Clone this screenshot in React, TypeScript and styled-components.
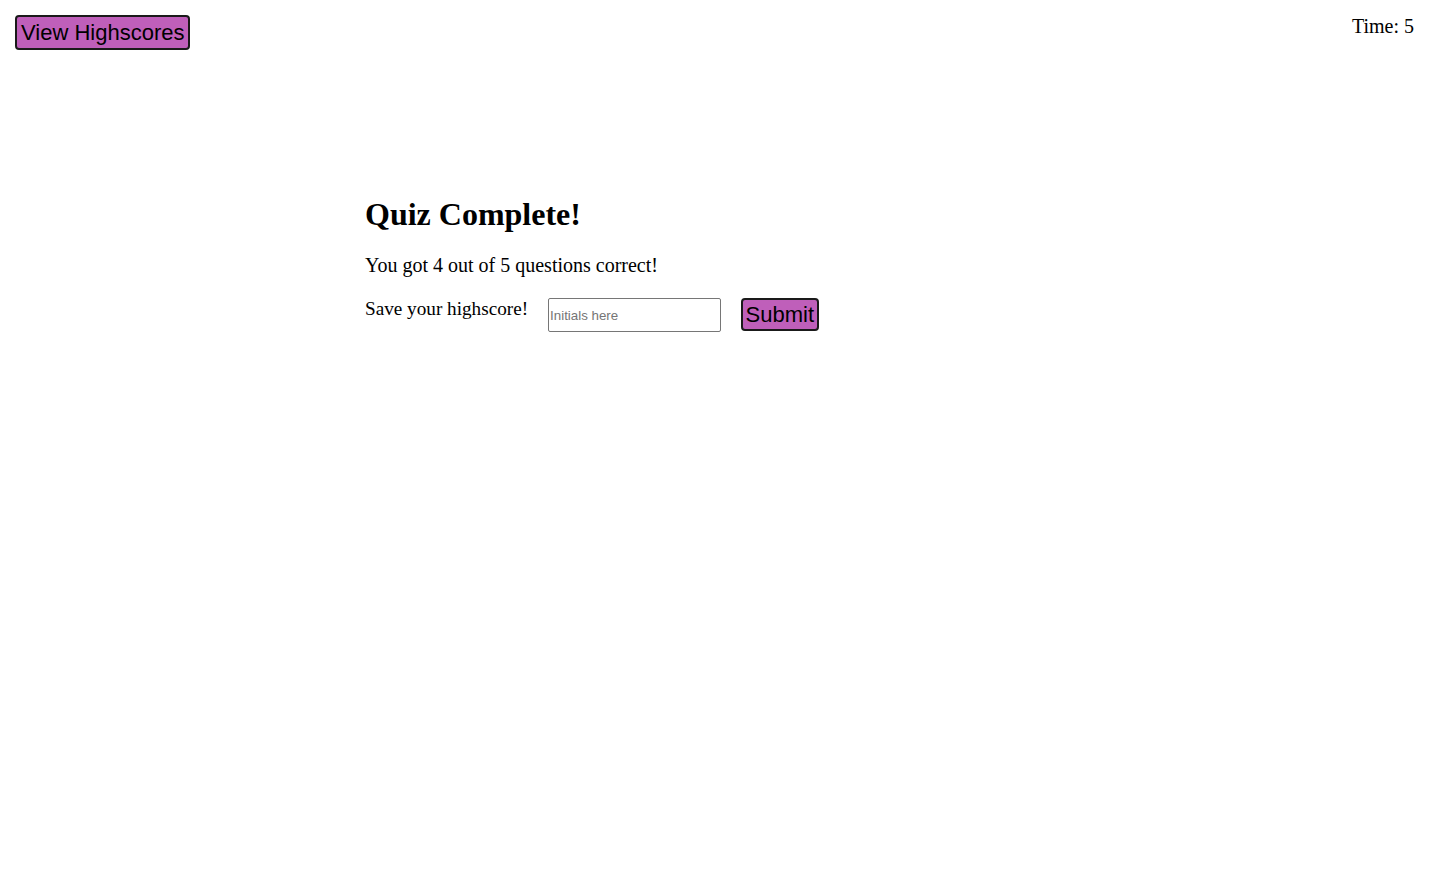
import React from 'react';
import styled, { createGlobalStyle } from 'styled-components';

const GlobalStyle = createGlobalStyle`
  body {
    margin: 0;
    background: #ffffff;
    color: #000000;
    font-family: 'Liberation Serif', 'Times New Roman', serif;
  }
`;

const accent = '#bf5fba';

const App: React.FC = () => (
  <>
    <GlobalStyle />
    <Header>
      <PurpleButton type='button'>View Highscores</PurpleButton>
      <Timer>Time: 5</Timer>
    </Header>

    <Main>
      <Title>Quiz Complete!</Title>
      <Score>You got 4 out of 5 questions correct!</Score>
      <SaveRow>
        <SaveLabel htmlFor='initials'>Save your highscore!</SaveLabel>
        <Initials id='initials' type='text' placeholder='Initials here' />
        <PurpleButton type='button' $compact>
          Submit
        </PurpleButton>
      </SaveRow>
    </Main>
  </>
);

export default App;

const Header = styled.header`
  display: flex;
  justify-content: space-between;
  align-items: flex-start;
  padding: 15px 16px 0 15px;
`;

const PurpleButton = styled.button<{ $compact?: boolean }>`
  font-family: 'Liberation Sans', Arial, sans-serif;
  font-size: 22px;
  line-height: 25px;
  color: #000000;
  background: ${accent};
  border: 2px solid #1a1a1a;
  border-radius: 4px;
  padding: ${({ $compact }) => ($compact ? '2px 2.5px' : '3px 4px')};
  cursor: pointer;
`;

const Timer = styled.div`
  font-size: 20px;
  line-height: 23px;
`;

const Main = styled.main`
  width: 700px;
  margin: 0 auto;
  padding-top: 125px;
`;

const Title = styled.h1`
  font-size: 32px;
  font-weight: bold;
  margin: 21px 0;
`;

const Score = styled.p`
  font-size: 20px;
  margin: 20px 0 21px;
`;

const SaveRow = styled.div`
  display: flex;
  align-items: flex-start;
  gap: 20px;
`;

const SaveLabel = styled.label`
  font-size: 19.2px;
  line-height: 23px;
  margin-top: -1px;
`;

const Initials = styled.input`
  box-sizing: border-box;
  width: 173px;
  height: 34px;
  padding: 1px 1px;
  font-family: 'Liberation Sans', Arial, sans-serif;
  font-size: 13.33px;
  border: 1px solid #767676;
  border-radius: 2px;

  &::placeholder {
    color: #757575;
  }
`;
